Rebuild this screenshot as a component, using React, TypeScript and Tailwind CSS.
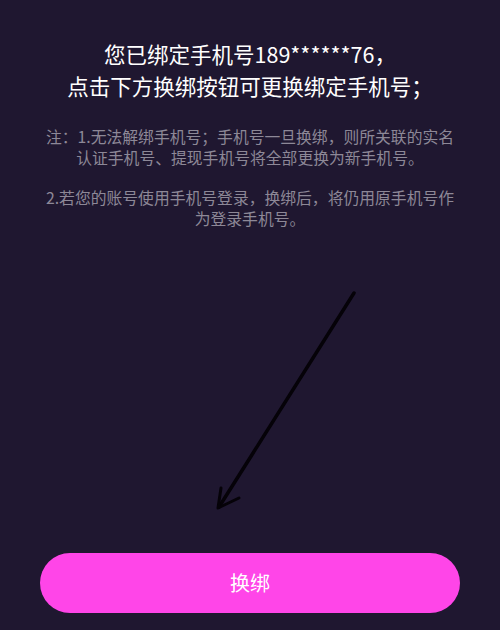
const font = {
  fontFamily: '"Noto Sans CJK SC", "Noto Sans", sans-serif',
};

const BindPhone = () => {
  return (
    <div
      className="relative w-[500px] h-[630px] bg-[#1f1730] flex flex-col items-center overflow-hidden"
      style={font}
    >
      <p className="pt-[38px] text-center text-white text-[21.5px] leading-[32px]">
        您已绑定手机号189******76，
        <br />
        点击下方换绑按钮可更换绑定手机号；
      </p>

      <div className="mt-[24px] text-center text-[#8d8897] text-[15.8px] leading-[21px]">
        <p>
          注：1.无法解绑手机号；手机号一旦换绑，则所关联的实名
          <br />
          认证手机号、提现手机号将全部更换为新手机号。
        </p>
        <p className="mt-[19px]">
          2.若您的账号使用手机号登录，换绑后，将仍用原手机号作
          <br />
          为登录手机号。
        </p>
      </div>

      {/* annotation arrow drawn over the page */}
      <svg
        className="absolute left-0 top-0 pointer-events-none"
        width="500"
        height="630"
        viewBox="0 0 500 630"
      >
        <path
          d="M354 293 L219 507"
          stroke="#050208"
          strokeWidth="3.5"
          strokeLinecap="round"
          fill="none"
        />
        <path
          d="M221 488 L218 508 L239 498"
          stroke="#050208"
          strokeWidth="3"
          strokeLinecap="round"
          strokeLinejoin="round"
          fill="none"
        />
      </svg>

      <div className="mt-auto mb-[17px] w-full px-[40px]">
        <button className="w-full h-[60px] rounded-full bg-[#ff45e8] text-white text-[20px]">
          换绑
        </button>
      </div>
    </div>
  );
};

export default function App() {
  return <BindPhone />;
}
